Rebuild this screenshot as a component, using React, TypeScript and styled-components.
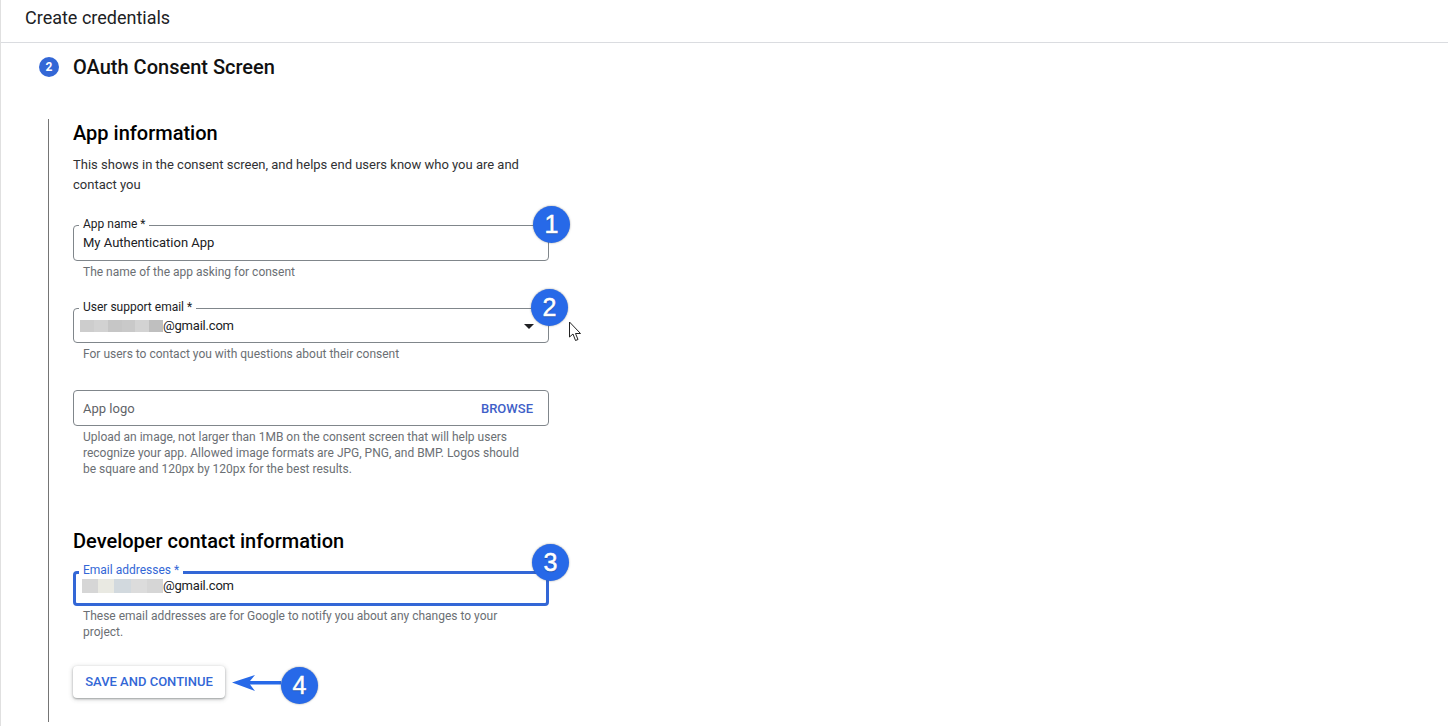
import React from 'react';
import styled, { createGlobalStyle } from 'styled-components';

const GlobalStyle = createGlobalStyle`
  html, body {
    margin: 0;
    padding: 0;
    background: #fff;
    font-family: Roboto, "Liberation Sans", sans-serif;
    overflow: hidden;
  }
`;

const Page = styled.div`
  width: 1448px;
  height: 726px;
  box-sizing: border-box;
  border-left: 1px solid #e0e0e0;
  overflow: hidden;
`;

const TopBar = styled.div`
  height: 35px;
  padding: 0 0 7px 24px;
  display: flex;
  align-items: center;
  border-top: 1px solid #f0f0f0;
  border-bottom: 1px solid #dadce0;
  margin-top: -1px;
  font-size: 18px;
  color: #202124;
`;

const StepHeader = styled.div`
  display: flex;
  align-items: center;
  height: 20px;
  margin: 14px 0 0 38px;
  gap: 14px;
`;

const StepNumber = styled.div`
  width: 20px;
  height: 20px;
  border-radius: 50%;
  background: #3367d6;
  color: #fff;
  font-size: 12px;
  font-weight: 700;
  display: flex;
  align-items: center;
  justify-content: center;
`;

const StepTitle = styled.h2`
  margin: 0;
  font-size: 20px;
  font-weight: 500;
  color: #111;
`;

const StepBody = styled.div`
  margin: 42px 0 0 47px;
  padding: 0 0 0 24px;
  border-left: 1px solid #757575;
  height: 603px;
  width: 476px;
`;

const SectionTitle = styled.h3<{ $top: number }>`
  margin: ${p => p.$top}px 0 0;
  font-size: 20px;
  line-height: 28px;
  font-weight: 500;
  color: #000;
`;

const Intro = styled.p`
  margin: 8px 0 0;
  font-size: 13px;
  line-height: 20px;
  color: #303134;
`;

const FieldBox = styled.div<{ $top: number; $height: number; $focused?: boolean; $lift?: number }>`
  position: relative;
  box-sizing: border-box;
  width: 476px;
  height: ${p => p.$height}px;
  margin-top: ${p => p.$top}px;
  padding: 0 15px ${p => p.$lift ?? 0}px ${p => (p.$focused ? 7 : 9)}px;
  display: flex;
  align-items: center;
  justify-content: space-between;
  border: ${p => (p.$focused ? '3px solid #3367d6' : '1px solid #80868b')};
  border-radius: 4px;
  font-size: 13px;
  color: #202124;
`;

const FloatLabel = styled.label<{ $focused?: boolean }>`
  position: absolute;
  top: ${p => (p.$focused ? '-11px' : '-9px')};
  left: ${p => (p.$focused ? '3px' : '5px')};
  padding: 0 4px;
  background: #fff;
  font-size: 12px;
  line-height: 14px;
  color: ${p => (p.$focused ? '#3367d6' : '#202124')};
`;

const FieldValue = styled.span`
  display: inline-flex;
  align-items: center;
`;

const Placeholder = styled.span`
  color: #5f6368;
`;

const EmailDomain = styled.span`
  letter-spacing: -0.2px;
`;

// blurred part of the address, one colour per pixelated block
const Redacted = styled.span<{ $width: number; $height: number; $pull: number; $blocks: string[] }>`
  display: inline-block;
  height: ${p => p.$height}px;
  width: ${p => p.$width}px;
  margin-left: -${p => p.$pull}px;
  background: linear-gradient(
    90deg,
    ${p =>
      p.$blocks
        .map((c, i) => {
          const step = 100 / p.$blocks.length;
          return `${c} ${i * step}% ${(i + 1) * step}%`;
        })
        .join(', ')}
  );
`;

const Help = styled.div<{ $top?: number }>`
  margin-top: ${p => p.$top ?? 3}px;
  padding: 0 24px 0 10px;
  font-size: 12px;
  line-height: 16px;
  color: #6b6f74;
`;

const BrowseLink = styled.span`
  font-size: 13px;
  font-weight: 500;
  color: #3f5fc8;
`;

const DropArrow = styled.span`
  width: 0;
  height: 0;
  border-left: 5px solid transparent;
  border-right: 5px solid transparent;
  border-top: 5px solid #202124;
  margin-right: -1px;
  margin-top: 1px;
`;

const Callout = styled.div<{ $x?: number; $y?: number }>`
  ${p => p.$x !== undefined && `position: absolute; left: ${p.$x}px; top: ${p.$y}px;`}
  box-sizing: border-box;
  width: 37px;
  height: 37px;
  flex-shrink: 0;
  border-radius: 50%;
  background: #2769e8;
  box-shadow: 0 0 2px rgba(60, 64, 67, 0.55);
  color: #fff;
  font-family: "Liberation Sans", Arial, sans-serif;
  font-size: 25px;
  line-height: 37px;
  text-align: center;
  -webkit-text-stroke: 0.5px #fff;
  text-shadow: 0 1px 1px rgba(0, 0, 0, 0.35);
`;

const ActionRow = styled.div`
  display: flex;
  align-items: flex-start;
  margin-top: 26px;
  position: relative;
`;

const SaveButton = styled.button`
  width: 152px;
  height: 32px;
  padding: 0 0 2px;
  border: none;
  border-radius: 4px;
  background: #fff;
  box-shadow: 0 1px 2px rgba(60, 64, 67, 0.4), 0 1px 4px 1px rgba(60, 64, 67, 0.18);
  color: #3367d6;
  font-family: inherit;
  font-size: 13px;
  font-weight: 500;
`;

const ArrowIcon = styled.svg`
  display: block;
  margin: 8px 0 0 6px;
  flex-shrink: 0;
`;

const ActionCallout = styled(Callout)`
  margin: 1px 0 0 0;
`;

const Pointer = styled.svg`
  position: absolute;
  left: 568px;
  top: 321px;
`;

const App: React.FC = () => (
  <Page>
    <GlobalStyle />
    <TopBar>Create credentials</TopBar>

    <StepHeader>
      <StepNumber>2</StepNumber>
      <StepTitle>OAuth Consent Screen</StepTitle>
    </StepHeader>

    <StepBody>
      <SectionTitle $top={0}>App information</SectionTitle>
      <Intro>
        This shows in the consent screen, and helps end users know who you are and
        <br />
        contact you
      </Intro>

      <FieldBox $top={30} $height={36} $lift={2}>
        <FloatLabel>App name *</FloatLabel>
        <FieldValue>My Authentication App</FieldValue>
        <Callout $x={459} $y={-20}>1</Callout>
      </FieldBox>
      <Help>The name of the app asking for consent</Help>

      <FieldBox $top={28} $height={35}>
        <FloatLabel>User support email *</FloatLabel>
        <FieldValue>
          <Redacted
            $width={83}
            $height={12}
            $pull={3}
            $blocks={['#cdcdcd', '#d2d2d2', '#c6c6c6', '#c9c9c9', '#d3d3d3', '#bfbfbf']}
          />
          <EmailDomain>@gmail.com</EmailDomain>
        </FieldValue>
        <DropArrow />
        <Callout $x={457} $y={-20}>2</Callout>
      </FieldBox>
      <Help>For users to contact you with questions about their consent</Help>

      <FieldBox $top={28} $height={36}>
        <Placeholder>App logo</Placeholder>
        <BrowseLink>BROWSE</BrowseLink>
      </FieldBox>
      <Help>
        Upload an image, not larger than 1MB on the consent screen that will help users
        recognize your app. Allowed image formats are JPG, PNG, and BMP. Logos should
        be square and 120px by 120px for the best results.
      </Help>

      <SectionTitle $top={50}>Developer contact information</SectionTitle>

      <FieldBox $top={16} $height={35} $focused $lift={6}>
        <FloatLabel $focused>Email addresses *</FloatLabel>
        <FieldValue>
          <Redacted
            $width={81}
            $height={14}
            $pull={1}
            $blocks={['#d6d6d6', '#e9e9e2', '#d2d9de', '#dcdcdc', '#d6d6d6']}
          />
          <EmailDomain>@gmail.com</EmailDomain>
        </FieldValue>
        <Callout $x={456} $y={-30}>3</Callout>
      </FieldBox>
      <Help $top={2}>These email addresses are for Google to notify you about any changes to your project.</Help>

      <ActionRow>
        <SaveButton>SAVE AND CONTINUE</SaveButton>
        <ArrowIcon width="50" height="18" viewBox="0 0 50 18">
          <path d="M1 8.5 L24 1 L19 7 L50 7 L50 10.5 L19 10.5 L24 17 Z" fill="#2769e8" />
        </ArrowIcon>
        <ActionCallout>4</ActionCallout>
      </ActionRow>
    </StepBody>

    <Pointer width="15" height="21" viewBox="0 0 15 21">
      <path
        d="M1.5 1 L1.5 16 L5 13 L7.5 19.5 L10 18.5 L7.5 12.5 L12.5 12.5 Z"
        fill="#fff"
        stroke="#222"
        strokeWidth="1"
      />
    </Pointer>
  </Page>
);

export default App;
